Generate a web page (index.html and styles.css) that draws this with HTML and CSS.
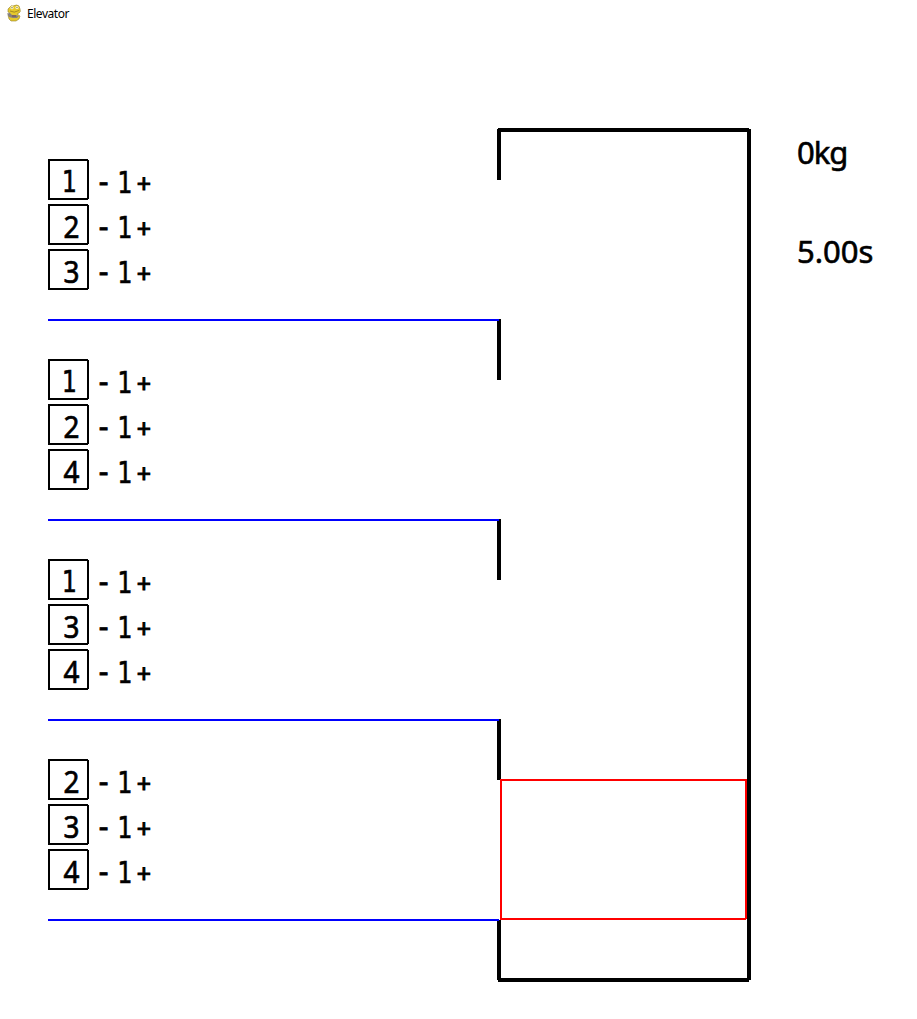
FILE: index.html
```
<!DOCTYPE html>
<html lang="en">
<head>
<meta charset="utf-8">
<title>Elevator</title>
<link rel="stylesheet" href="styles.css">
</head>
<body>
<header class="titlebar">
<svg class="logo" width="16" height="18" viewBox="0 0 16 18">
<path d="M4 3Q5 1 7 2Q11 0 13 2L14 5Q15 8 13 9L11 10L14 12L13 15L10 17H5L3 15L2 11L4 9L2 8L2 5Z" fill="#e6c92b" stroke="#94822f" stroke-width=".6"/>
<path d="M4 7Q8 9.500 13 6.500" fill="none" stroke="#a58b22"/>
<circle cx="6" cy="3.700" r="1.600" fill="#fbf6c8"/><circle cx="11" cy="3.500" r="1.600" fill="#fbf6c8"/>
<circle cx="6" cy="3.700" r=".6" fill="#555"/><circle cx="11" cy="3.500" r=".6" fill="#555"/>
<path d="M1 9.500L4 9L6 11L10 11L13 12L11 14H7L3 13Z" fill="#85817f"/>
<path d="M6 12H10" stroke="#7b4b45"/>
</svg>
<span class="title">Elevator</span>
</header>
<main class="scene">
<div class="floors">
<section class="floor">
<div class="row"><b class="box"><span class="one">1</span></b><span class="minus">-</span><span class="count one">1</span><span class="plus">+</span></div>
<div class="row"><b class="box"><span class="digit">2</span></b><span class="minus">-</span><span class="count one">1</span><span class="plus">+</span></div>
<div class="row"><b class="box"><span class="digit">3</span></b><span class="minus">-</span><span class="count one">1</span><span class="plus">+</span></div>
</section>
<section class="floor">
<div class="row"><b class="box"><span class="one">1</span></b><span class="minus">-</span><span class="count one">1</span><span class="plus">+</span></div>
<div class="row"><b class="box"><span class="digit">2</span></b><span class="minus">-</span><span class="count one">1</span><span class="plus">+</span></div>
<div class="row"><b class="box"><span class="digit">4</span></b><span class="minus">-</span><span class="count one">1</span><span class="plus">+</span></div>
</section>
<section class="floor">
<div class="row"><b class="box"><span class="one">1</span></b><span class="minus">-</span><span class="count one">1</span><span class="plus">+</span></div>
<div class="row"><b class="box"><span class="digit">3</span></b><span class="minus">-</span><span class="count one">1</span><span class="plus">+</span></div>
<div class="row"><b class="box"><span class="digit">4</span></b><span class="minus">-</span><span class="count one">1</span><span class="plus">+</span></div>
</section>
<section class="floor">
<div class="row"><b class="box"><span class="digit">2</span></b><span class="minus">-</span><span class="count one">1</span><span class="plus">+</span></div>
<div class="row"><b class="box"><span class="digit">3</span></b><span class="minus">-</span><span class="count one">1</span><span class="plus">+</span></div>
<div class="row"><b class="box"><span class="digit">4</span></b><span class="minus">-</span><span class="count one">1</span><span class="plus">+</span></div>
</section>
</div>
<svg class="shaft" width="254" height="854" viewBox="0 0 254 854" shape-rendering="crispEdges">
<path d="M1 0H252V1H254V852H252V854H1V852H0V793H2V792H4V850H250V4H4V52H0V1H1Z"/>
<path d="M2 191H4V252H0V193H2ZM2 391H4V452H0V393H2ZM2 591H4V652H0V593H2Z"/>
<path d="M3 651H250V791H249V792H3ZM5 653V790H248V653Z" fill="#f00" fill-rule="evenodd"/>
</svg>
<aside class="readout">
<div class="value weight">0kg</div>
<div class="value time">5.00s</div>
</aside>
</main>
</body>
</html>
```
FILE: styles.css
```
* { box-sizing: border-box; }
body { margin: 0; width: 917px; height: 1019px; overflow: hidden; background: #fff; color: #000; font-family: "Noto Sans", sans-serif; }
.titlebar { height: 28px; padding-left: 6px; display: flex; align-items: center; gap: 5px; }
.logo { flex: none; margin-top: -2px; }
.title { font-size: 12px; line-height: 18px; letter-spacing: -.45px; }
.scene { display: flex; align-items: flex-start; padding: 100px 0 0 48px; }
.floors { width: 451px; padding-top: 31px; }
.floor { height: 162px; margin-bottom: 38px; display: flex; flex-direction: column; gap: 4px; border-bottom: 2px solid #00f; }
.row { height: 41px; display: flex; align-items: stretch; font-size: 30px; line-height: 41px; -webkit-text-stroke: .7px #000; }
/* The last corner pixel of each button is left open. */
.box { width: 41px; border: 2px solid #000; padding-left: 7px; display: flex; justify-content: center; line-height: 41px; font-weight: 400; clip-path: polygon(0 0, 40px 0, 40px 1px, 100% 1px, 100% 40px, 40px 40px, 40px 100%, 0 100%); }
.one { font-family: "DejaVu Sans", sans-serif; font-size: 30px; transform: scaleX(.78); }
.box .one { margin-left: -4px; line-height: 42px; }
.digit { transform: scaleX(.93); }
.minus { width: 29px; text-align: center; -webkit-text-stroke: .8px #000; line-height: 43px; }
.count { width: 14px; display: flex; justify-content: center; line-height: 47px; }
.plus { width: 24px; text-align: center; font-size: 25px; line-height: 48px; -webkit-text-stroke: 1px #000; }
.shaft { flex: none; margin-left: -2px; }
.readout { padding: 3px 0 0 46px; }
.value { height: 99px; font-size: 31px; line-height: 42px; white-space: nowrap; -webkit-text-stroke: .6px #000; }
.weight { letter-spacing: -1px; }
```
